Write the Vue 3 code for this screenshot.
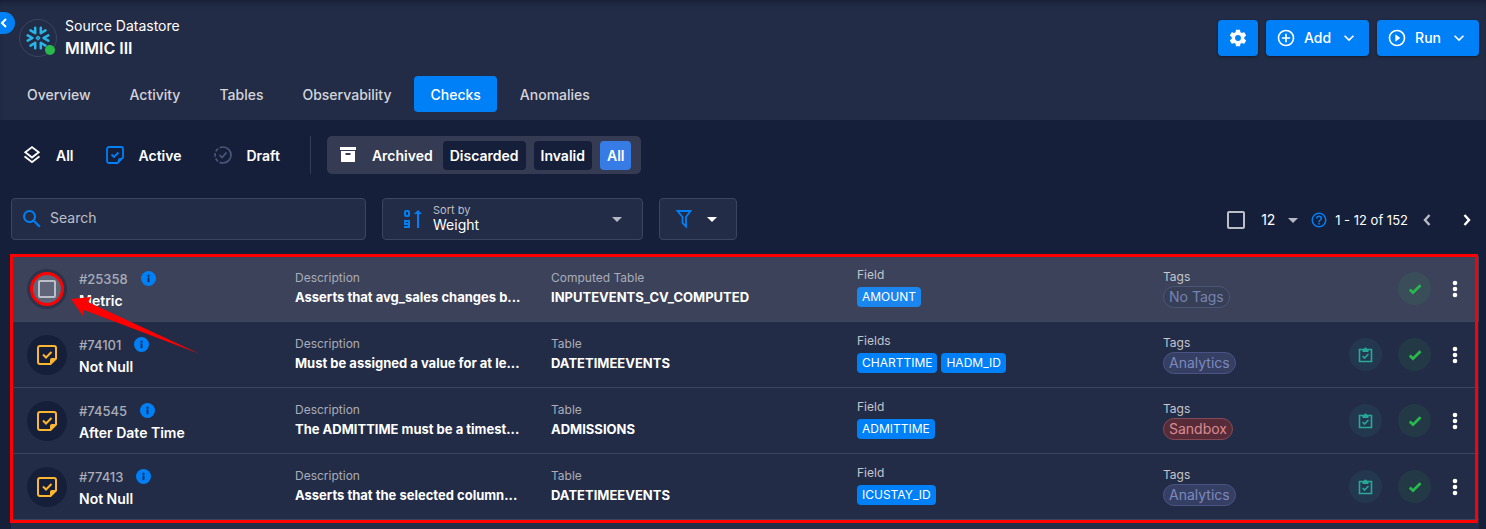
<script setup>
import { ref } from 'vue'

const icons = {
  cog: 'M12,15.5A3.5,3.5 0 0,1 8.5,12A3.5,3.5 0 0,1 12,8.5A3.5,3.5 0 0,1 15.5,12A3.5,3.5 0 0,1 12,15.5M19.43,12.97C19.47,12.65 19.5,12.33 19.5,12C19.5,11.67 19.47,11.34 19.43,11L21.54,9.37C21.73,9.22 21.78,8.95 21.66,8.73L19.66,5.27C19.54,5.05 19.27,4.96 19.05,5.05L16.56,6.05C16.04,5.66 15.5,5.32 14.87,5.07L14.5,2.42C14.46,2.18 14.25,2 14,2H10C9.75,2 9.54,2.18 9.5,2.42L9.13,5.07C8.5,5.32 7.96,5.66 7.44,6.05L4.95,5.05C4.73,4.96 4.46,5.05 4.34,5.27L2.34,8.73C2.21,8.95 2.27,9.22 2.46,9.37L4.57,11C4.53,11.34 4.5,11.67 4.5,12C4.5,12.33 4.53,12.65 4.57,12.97L2.46,14.63C2.27,14.78 2.21,15.05 2.34,15.27L4.34,18.73C4.46,18.95 4.73,19.03 4.95,18.95L7.44,17.94C7.96,18.34 8.5,18.68 9.13,18.93L9.5,21.58C9.54,21.82 9.75,22 10,22H14C14.25,22 14.46,21.82 14.5,21.58L14.87,18.93C15.5,18.67 16.04,18.34 16.56,17.94L19.05,18.95C19.27,19.03 19.54,18.95 19.66,18.73L21.66,15.27C21.78,15.05 21.73,14.78 21.54,14.63L19.43,12.97Z',
  plus: 'M12,20C7.59,20 4,16.41 4,12C4,7.59 7.59,4 12,4C16.41,4 20,7.59 20,12C20,16.41 16.41,20 12,20M12,2A10,10 0 0,0 2,12A10,10 0 0,0 12,22A10,10 0 0,0 22,12A10,10 0 0,0 12,2M13,7H11V11H7V13H11V17H13V13H17V11H13V7Z',
  play: 'M12,20C7.59,20 4,16.41 4,12C4,7.59 7.59,4 12,4C16.41,4 20,7.59 20,12C20,16.41 16.41,20 12,20M12,2A10,10 0 0,0 2,12A10,10 0 0,0 12,22A10,10 0 0,0 22,12A10,10 0 0,0 12,2M10,16.5L16,12L10,7.5V16.5Z',
  down: 'M7.41,8.58L12,13.17L16.59,8.58L18,10L12,16L6,10L7.41,8.58Z',
  layers: 'M12,18.54L19.37,12.8L21,14.07L12,21.07L3,14.07L4.62,12.81L12,18.54M12,16L3,9L12,2L21,9L12,16M12,4.53L6.26,9L12,13.47L17.74,9L12,4.53Z',
  search: 'M9.5,3A6.5,6.5 0 0,1 16,9.5C16,11.11 15.41,12.59 14.44,13.73L14.71,14H15.5L20.5,19L19,20.5L14,15.5V14.71L13.73,14.44C12.59,15.41 11.11,16 9.5,16A6.5,6.5 0 0,1 3,9.5A6.5,6.5 0 0,1 9.5,3M9.5,5C7,5 5,7 5,9.5C5,12 7,14 9.5,14C12,14 14,12 14,9.5C14,7 12,5 9.5,5Z',
  help: 'M11,18H13V16H11V18M12,2A10,10 0 0,0 2,12A10,10 0 0,0 12,22A10,10 0 0,0 22,12A10,10 0 0,0 12,2M12,20C7.59,20 4,16.41 4,12C4,7.59 7.59,4 12,4C16.41,4 20,7.59 20,12C20,16.41 16.41,20 12,20M12,6A4,4 0 0,0 8,10H10A2,2 0 0,1 12,8A2,2 0 0,1 14,10C14,12 11,11.75 11,15H13C13,12.75 16,12.5 16,10A4,4 0 0,0 12,6Z',
  check: 'M9,20.42L2.79,14.21L5.62,11.38L9,14.77L18.88,4.88L21.71,7.71L9,20.42Z'
}

const tabs = ['Overview', 'Activity', 'Tables', 'Observability', 'Checks', 'Anomalies']
const activeTab = ref('Checks')
const search = ref('')
const sortBy = ref('Weight')
const pageSize = ref('12')

const rows = [
  { id: '#25358', rule: 'Metric', description: 'Asserts that avg_sales changes b...', tableLabel: 'Computed Table', table: 'INPUTEVENTS_CV_COMPUTED', fields: ['AMOUNT'], tag: 'No Tags', tone: 'none', hovered: true },
  { id: '#74101', rule: 'Not Null', description: 'Must be assigned a value for at le...', tableLabel: 'Table', table: 'DATETIMEEVENTS', fields: ['CHARTTIME', 'HADM_ID'], tag: 'Analytics', tone: 'indigo' },
  { id: '#74545', rule: 'After Date Time', description: 'The ADMITTIME must be a timest...', tableLabel: 'Table', table: 'ADMISSIONS', fields: ['ADMITTIME'], tag: 'Sandbox', tone: 'red' },
  { id: '#77413', rule: 'Not Null', description: 'Asserts that the selected column...', tableLabel: 'Table', table: 'DATETIMEEVENTS', fields: ['ICUSTAY_ID'], tag: 'Analytics', tone: 'indigo' }
]
</script>

<template>
  <div class="page">
    <header class="header">
      <button class="collapse" aria-label="Collapse sidebar">
        <svg width="8" height="10" viewBox="0 0 8 10"><path d="M6 1 2 5l4 4" fill="none" stroke="#fff" stroke-width="2" /></svg>
      </button>
      <div class="title-row">
        <div class="logo">
          <svg width="24" height="24" viewBox="-12 -12 24 24" fill="none" stroke="#29b5e8" stroke-width="2.5" stroke-linecap="round" stroke-linejoin="round">
            <path d="M0-1.8 1.8 0 0 1.800-1.800 0Z" stroke-width="1.3" />
            <path v-for="n in 6" :key="n" d="M10.3-2.700 5.500 0l4.800 2.700" :transform="`rotate(${n * 60})`" />
          </svg>
          <span class="status"></span>
        </div>
        <div class="titles">
          <span class="kind">Source Datastore</span>
          <h1>MIMIC III</h1>
        </div>
        <div class="header-actions">
          <button class="primary square" aria-label="Settings"><svg width="20" height="20" viewBox="0 0 24 24"><path :d="icons.cog" /></svg></button>
          <button class="primary">
            <svg width="20" height="20" viewBox="0 0 24 24"><path :d="icons.plus" /></svg>
            <span>Add</span>
            <svg width="20" height="20" viewBox="0 0 24 24"><path :d="icons.down" /></svg>
          </button>
          <button class="primary">
            <svg width="20" height="20" viewBox="0 0 24 24"><path :d="icons.play" /></svg>
            <span>Run</span>
            <svg width="20" height="20" viewBox="0 0 24 24"><path :d="icons.down" /></svg>
          </button>
        </div>
      </div>
      <nav class="tabs">
        <a v-for="tab in tabs" :key="tab" href="#" class="tab" :class="{ active: tab === activeTab }" @click.prevent="activeTab = tab">{{ tab }}</a>
      </nav>
    </header>

    <main class="content">
      <div class="filters">
        <button class="filter">
          <svg width="20" height="20" viewBox="1 1 22 22" fill="#fff"><path :d="icons.layers" /></svg><span>All</span>
        </button>
        <button class="filter">
          <svg width="18" height="18" viewBox="0 0 18 18" fill="none" stroke="#0080f7" stroke-width="1.8">
            <path d="M3 1h12a2 2 0 0 1 2 2v8.5L11.5 17H3a2 2 0 0 1-2-2V3a2 2 0 0 1 2-2Z" />
            <path d="M12 17v-3a2 2 0 0 1 2-2h3Z" fill="#0080f7" stroke="none" /><path d="m5.500 8.500 2.500 2.500 4.500-4.500" />
          </svg><span>Active</span>
        </button>
        <button class="filter">
          <svg width="18" height="18" viewBox="0 0 18 18" fill="none" stroke="#4b577b" stroke-width="1.7">
            <path d="M9 1a8 8 0 0 1 0 16" /><path d="M9 17A8 8 0 0 1 9 1" stroke-dasharray="3.600 1.800" /><path d="m5.500 9 2.500 2.500 4.500-5" />
          </svg><span>Draft</span>
        </button>
        <span class="divider"></span>
        <div class="archive">
          <span class="archive-label">
            <svg width="18" height="18" viewBox="0 0 18 18" fill="#fff"><path d="M1 1h16v3H1Z" /><path fill-rule="evenodd" d="M2 5h14v11H2ZM6.500 7v2h5V7Z" /></svg><span>Archived</span>
          </span>
          <button class="chip">Discarded</button>
          <button class="chip">Invalid</button>
          <button class="chip selected">All</button>
        </div>
      </div>

      <div class="toolbar">
        <div class="box search">
          <svg width="24" height="24" viewBox="0 0 24 24" fill="#0080f7"><path :d="icons.search" /></svg>
          <input v-model="search" type="text" placeholder="Search" aria-label="Search" />
        </div>
        <div class="box sort">
          <svg width="20" height="20" viewBox="0 0 20 20" fill="none" stroke="#0080f7" stroke-width="2">
            <rect x="2" y="2" width="4" height="5" rx="1" /><path d="M6 15H2v-3h4v6H1M15 19V3" /><path d="m11 5 4-4 4 4Z" fill="#0080f7" stroke="none" />
          </svg>
          <div class="sort-text">
            <label for="sort">Sort by</label>
            <select id="sort" v-model="sortBy"><option>Weight</option></select>
          </div>
          <span class="caret"></span>
        </div>
        <button class="box funnel" aria-label="Filter">
          <svg width="18" height="20" viewBox="0 0 18 20" fill="none" stroke="#0080f7" stroke-width="1.8"><path d="M2.500 2h13L11 8v9.500L7.500 14V8Z" /></svg>
          <span class="caret bright"></span>
        </button>
        <div class="pager">
          <input type="checkbox" class="tick" aria-label="Select all" />
          <span class="size">
            <select v-model="pageSize" aria-label="Rows per page"><option>12</option></select>
            <span class="caret"></span>
          </span>
          <svg class="help" width="18" height="18" viewBox="0 0 24 24" fill="#0080f7"><path :d="icons.help" /></svg>
          <span class="range">1 - 12 of 152</span>
          <button class="arrow dim" aria-label="Previous page"><svg width="10" height="14" viewBox="0 0 10 14"><path d="M7.500 2 3 7l4.500 5" /></svg></button>
          <button class="arrow" aria-label="Next page"><svg width="10" height="14" viewBox="0 0 10 14"><path d="M2.500 2 7 7l-4.500 5" /></svg></button>
        </div>
      </div>

      <div class="list-wrap">
        <section class="list">
          <article v-for="row in rows" :key="row.id" class="row" :class="{ hovered: row.hovered }">
            <div class="badge">
              <span v-if="row.hovered" class="ring"><input type="checkbox" class="tick" :aria-label="`Select check ${row.id}`" /></span>
              <svg v-else width="22" height="22" viewBox="0 0 22 22" fill="none" stroke="#fdb62f" stroke-width="2">
                <path d="M4 2h14a2 2 0 0 1 2 2v10.500L14.500 20H4a2 2 0 0 1-2-2V4a2 2 0 0 1 2-2Z" />
                <path d="M14 20v-4a2 2 0 0 1 2-2h4Z" fill="#fdb62f" stroke="none" /><path d="m7 10.500 3 3 5.500-5.500" />
              </svg>
            </div>
            <div class="cell identity">
              <span class="id">{{ row.id }}
                <svg width="15" height="15" viewBox="0 0 16 16"><circle cx="8" cy="8" r="8" fill="#0080f7" /><path d="M7 4h2v2H7ZM7 7h2v5H7Z" fill="#1a2b55" /></svg>
              </span>
              <strong>{{ row.rule }}</strong>
            </div>
            <div class="cell">
              <span class="label">Description</span>
              <span class="value">{{ row.description }}</span>
            </div>
            <div class="cell">
              <span class="label">{{ row.tableLabel }}</span>
              <span class="value">{{ row.table }}</span>
            </div>
            <div class="cell fields">
              <span class="label light">{{ row.fields.length > 1 ? 'Fields' : 'Field' }}</span>
              <span class="field-chips"><span v-for="field in row.fields" :key="field" class="field">{{ field }}</span></span>
            </div>
            <div class="cell">
              <span class="label light">Tags</span>
              <span class="tag" :class="row.tone">{{ row.tag }}</span>
            </div>
            <div class="row-actions">
              <span v-if="!row.hovered" class="round teal">
                <svg width="15" height="16" viewBox="0 0 15 16" fill="none" stroke="#27a899" stroke-width="1.6">
                  <path d="M1.500 2.500h12v12h-12Z" /><path d="M4.500 5V2H6a1.500 1.500 0 0 1 3 0h1.500v3Z" fill="#27a899" stroke="none" /><path d="m4.500 9 2 2L10.500 7" />
                </svg>
              </span>
              <span class="round green"><svg width="16" height="16" viewBox="0 0 24 24" fill="#28b94b"><path :d="icons.check" /></svg></span>
              <button class="kebab" aria-label="More actions"><svg width="6" height="18" viewBox="0 0 6 18" fill="#fff"><circle cx="3" cy="3" r="2.300" /><circle cx="3" cy="9" r="2.300" /><circle cx="3" cy="15" r="2.300" /></svg></button>
            </div>
          </article>
        </section>
        <div class="outline"></div>
        <svg class="pointer" width="129" height="57" viewBox="0 0 129 57"><path d="M0 2 20 0 17 5 129 57 13 13 12 19Z" fill="#fe0000" /></svg>
      </div>
    </main>
  </div>
</template>

<style>
body { background: #161f3a; }
</style>

<style scoped>
* { box-sizing: border-box; }
.page { min-height: 100vh; display: flex; flex-direction: column; overflow: hidden; color: #fff; background: #161f3a; font-family: Inter, "Liberation Sans", sans-serif; font-size: 14px; line-height: 20px; }
button, input, select { font: inherit; color: inherit; margin: 0; padding: 0; border: 0; background: none; }
button { cursor: pointer; }
svg { display: block; flex: none; }
.header { position: relative; padding: 16px 7px 8px 11px; background: #232c46; box-shadow: inset 0 6px 6px -4px rgba(8, 14, 32, 0.5); }
.collapse { position: absolute; left: 0; top: 12px; width: 15px; height: 22px; display: flex; align-items: center; border-radius: 0 11px 11px 0; background: #0080f7; }
.title-row { display: flex; align-items: center; height: 44px; }
.logo { position: relative; margin: 0 8px; width: 38px; height: 38px; display: grid; place-items: center; border: 1px solid #3b4560; border-radius: 50%; }
.status { position: absolute; right: 1px; bottom: 1px; width: 10px; height: 10px; border-radius: 50%; background: #28b94b; }
.titles { flex: 1; display: flex; flex-direction: column; }
.kind { line-height: 20px; }
h1 { margin: 0; font-size: 16px; line-height: 24px; font-weight: 600; }
.header-actions { display: flex; gap: 8px; }
.primary { height: 36px; padding: 0 10px; display: flex; align-items: center; gap: 8px; border-radius: 4px; background: #0080f7; box-shadow: 0 1px 3px rgba(0, 0, 0, 0.4); font-weight: 500; }
.primary svg { fill: #fff; }
.square { width: 40px; }
.tabs { display: flex; gap: 7px; margin-top: 16px; }
.tab { padding: 9px 16px 7px; border-radius: 4px; color: #d3d5da; text-decoration: none; font-weight: 500; }
.tab.active { background: #0080f7; color: #fff; }
.content { flex: 1; display: flex; flex-direction: column; padding: 16px 7px 0 11px; }
.filters { display: flex; align-items: center; gap: 8px; font-weight: 600; }
.filter { height: 38px; padding: 0 12px; display: flex; align-items: center; gap: 15px; font-weight: 600; }
.filter:first-child { padding-left: 11px; gap: 14px; }
.filter span, .archive-label span { padding-top: 2px; }
.divider { width: 1px; height: 38px; margin: 0 8px 0 10px; background: #353d56; }
.archive { display: flex; align-items: center; gap: 8px; height: 38px; padding: 0 10px 0 12px; border-radius: 5px; background: #343b52; }
.archive-label { display: flex; align-items: center; gap: 15px; margin-right: 2px; }
.chip { height: 29px; padding: 2px 7px 0; border-radius: 4px; background: #161f3a; font-weight: 600; }
.chip.selected { background: #377ce4; }
.toolbar { display: flex; align-items: center; gap: 16px; margin-top: 24px; }
.box { height: 42px; display: flex; align-items: center; border: 1px solid #3b4560; border-radius: 4px; background: #232c46; }
.search { flex: 0 1 355px; padding: 0 8px; gap: 6px; }
.search input { flex: 1; min-width: 0; padding-bottom: 2px; outline: 0; }
.search input::placeholder { color: #bcbfc8; opacity: 1; }
.sort { flex: 0 1 261px; padding: 0 20px; gap: 10px; }
.sort-text { flex: 1; display: flex; flex-direction: column; padding-bottom: 2px; }
.sort-text label { font-size: 11px; line-height: 14px; color: #bcbfc8; }
select { appearance: none; outline: 0; }
.sort select { line-height: 16px; height: 16px; }
.caret { border: 5px solid transparent; border-top-color: #b6b9c3; border-bottom: 0; }
.caret.bright { border-top-color: #fff; }
.funnel { width: 78px; padding-right: 4px; justify-content: center; gap: 14px; }
.pager { flex: 1; display: flex; align-items: center; justify-content: flex-end; padding-top: 2px; }
.tick { appearance: none; width: 18px; height: 18px; border: 2px solid #bcbfc8; border-radius: 2px; }
.size { display: flex; align-items: center; gap: 12px; margin: 0 12px 0 16px; }
.range { margin: 0 11px 0 7px; font-size: 13px; }
.arrow { width: 16px; display: grid; place-items: center; }
.arrow path { fill: none; stroke: #fff; stroke-width: 2.400; }
.arrow + .arrow { margin: 0 4px 0 24px; }
.dim { opacity: 0.7; }
.list-wrap { position: relative; flex: 1; display: flex; flex-direction: column; margin-top: 16px; background: #232c46; }
.list { padding-bottom: 8px; }
.row { display: grid; grid-template-columns: 52px 216fr 256fr 306fr 306fr 186fr 114px; align-items: center; height: 66px; padding: 0 16px; border-bottom: 1px solid #3b4560; }
.row.hovered { background: #3b4259; }
.badge { width: 40px; height: 40px; display: grid; place-items: center; border-radius: 50%; background: #161f3a; }
.hovered .badge { background: #2c334b; }
.ring { width: 34px; height: 34px; display: grid; place-items: center; border: 3px solid #fe0000; border-radius: 50%; background: #5f6478; }
.cell { min-width: 0; display: flex; flex-direction: column; align-items: flex-start; padding-bottom: 2px; white-space: nowrap; }
.cell.identity { padding: 2px 0 0; }
.id { display: flex; align-items: center; gap: 13px; font-size: 13px; line-height: 22px; font-weight: 500; color: #a9adb9; }
.identity strong { line-height: 22px; font-weight: 600; }
.label { font-size: 12px; line-height: 18px; color: #a9adb9; }
.label.light { color: #c4c6cd; }
.value { font-size: 13px; font-weight: 700; line-height: 20px; }
.cell.fields { gap: 3px; padding-bottom: 4px; }
.field-chips { display: flex; gap: 4px; }
.field { height: 20px; padding: 0 5px; border-radius: 4px; background: #0080f7; font-size: 12px; line-height: 20px; }
.hovered .field { background: #1c86ef; }
.tag { height: 22px; padding: 0 5px; border: 1px solid; border-radius: 11px; line-height: 20px; }
.tag.none { color: #7782b0; border-color: #4b5675; background: #373f57; }
.tag.indigo { color: #7d89bd; border-color: #4a5484; background: #353e63; }
.tag.red { color: #d88c92; border-color: #834955; background: #582b39; }
.row-actions { display: flex; justify-content: flex-end; gap: 16px; }
.round { width: 33px; height: 33px; display: grid; place-items: center; border-radius: 50%; }
.teal { background: #23384e; }
.green { background: #233a46; }
.hovered .green { background: #394e59; }
.kebab { width: 16px; display: grid; place-items: center; }
.outline { position: absolute; left: -1px; right: 1px; top: -2px; height: 269px; border: 3px solid #fe0000; pointer-events: none; }
.pointer { position: absolute; left: 60px; top: 41px; pointer-events: none; }
</style>
